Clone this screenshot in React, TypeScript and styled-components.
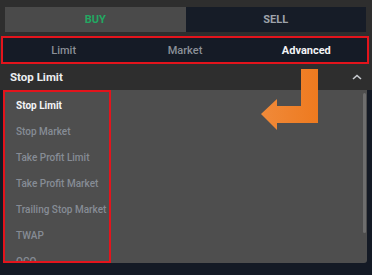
import styled, { createGlobalStyle } from "styled-components";

const GlobalStyle = createGlobalStyle`
  body {
    margin: 0;
    background: #2e2e2e;
    font-family: Roboto, "Liberation Sans", sans-serif;
  }
`;

const orderTypes = [
  "Stop Limit",
  "Stop Market",
  "Take Profit Limit",
  "Take Profit Market",
  "Trailing Stop Market",
  "TWAP",
  "OCO",
];

export default function App() {
  return (
    <>
      <GlobalStyle />
      <Frame>
        <SideSwitch>
          <SideButton active color="#22a862">BUY</SideButton>
          <SideButton color="#9ea3ab">SELL</SideButton>
        </SideSwitch>
        <Tabs>
          <Tab>Limit</Tab>
          <Tab>Market</Tab>
          <Tab active>Advanced</Tab>
        </Tabs>
        <SelectHeader>
          <span>Stop Limit</span>
          <Caret viewBox="0 0 10 6">
            <path d="M1 5 L5 1.5 L9 5" />
          </Caret>
        </SelectHeader>
        <Below>
          <Panel>
            <List>
              {orderTypes.map((t, i) => (
                <Item key={t} selected={i === 0}>
                  {t}
                </Item>
              ))}
            </List>
            <Scroll />
          </Panel>
        </Below>
        <Arrow viewBox="0 0 60 64">
          <defs>
            <linearGradient id="og" x1="0" x2="1" y1="0" y2="0">
              <stop offset="0" stopColor="#f08a3a" />
              <stop offset="1" stopColor="#ee7a1f" />
            </linearGradient>
          </defs>
          <path
            d="M40 0 H57 V54 H16 V61 L0 45 L16 30 V37 H40 Z"
            fill="url(#og)"
          />
        </Arrow>
      </Frame>
    </>
  );
}

const Frame = styled.div`
  position: relative;
  width: 372px;
  height: 275px;
  overflow: hidden;
  background: #2e2e2e;
  padding-top: 7px;
  box-sizing: border-box;
  display: flex;
  flex-direction: column;
`;

const SideSwitch = styled.div`
  display: flex;
  height: 25px;
  margin: 0 6px 0 5px;
`;

const SideButton = styled.div<{ active?: boolean; color: string }>`
  flex: 1;
  display: flex;
  align-items: center;
  justify-content: center;
  background: ${(p) => (p.active ? "#4a4a4a" : "#161c27")};
  color: ${(p) => p.color};
  font-size: 11px;
  font-weight: 700;
`;

const Tabs = styled.div`
  display: flex;
  height: 24px;
  margin: 4px 3px 0 1px;
  border: 2px solid #e3141c;
  background: #151b26;
`;

const Tab = styled.div<{ active?: boolean }>`
  flex: 1;
  display: flex;
  align-items: center;
  justify-content: center;
  font-size: 11px;
  font-weight: ${(p) => (p.active ? 700 : 500)};
  color: ${(p) => (p.active ? "#f2f3f5" : "#8b9098")};
`;

const SelectHeader = styled.div`
  height: 26px;
  display: flex;
  align-items: center;
  justify-content: space-between;
  padding: 0 10px 0 10px;
  color: #eceef1;
  font-size: 11.5px;
  font-weight: 700;
`;

const Caret = styled.svg`
  width: 10px;
  height: 6px;
  fill: none;
  stroke: #c9ccd1;
  stroke-width: 1.6;
`;

const Below = styled.div`
  flex: 1;
  background: #141a25;
`;

const Panel = styled.div`
  height: 173px;
  margin: 0 5px 0 3px;
  background: #4e4e4e;
  border-radius: 0 0 3px 3px;
  display: flex;
`;

const List = styled.div`
  width: 108px;
  height: 100%;
  box-sizing: border-box;
  border: 2px solid #e3141c;
  padding: 5px 0 0 11px;
  display: flex;
  flex-direction: column;
  overflow: hidden;
`;

const Item = styled.div<{ selected?: boolean }>`
  flex: none;
  height: 26px;
  line-height: 18px;
  white-space: nowrap;
  font-size: 10px;
  font-weight: ${(p) => (p.selected ? 700 : 500)};
  color: ${(p) => (p.selected ? "#f4f5f7" : "#868c95")};
`;

const Scroll = styled.div`
  margin: 3px 1px 0 auto;
  width: 3px;
  height: 140px;
  border-radius: 2px;
  background: #6e6e6e;
`;

const Arrow = styled.svg`
  position: absolute;
  left: 261px;
  top: 69px;
  width: 60px;
  height: 64px;
`;
